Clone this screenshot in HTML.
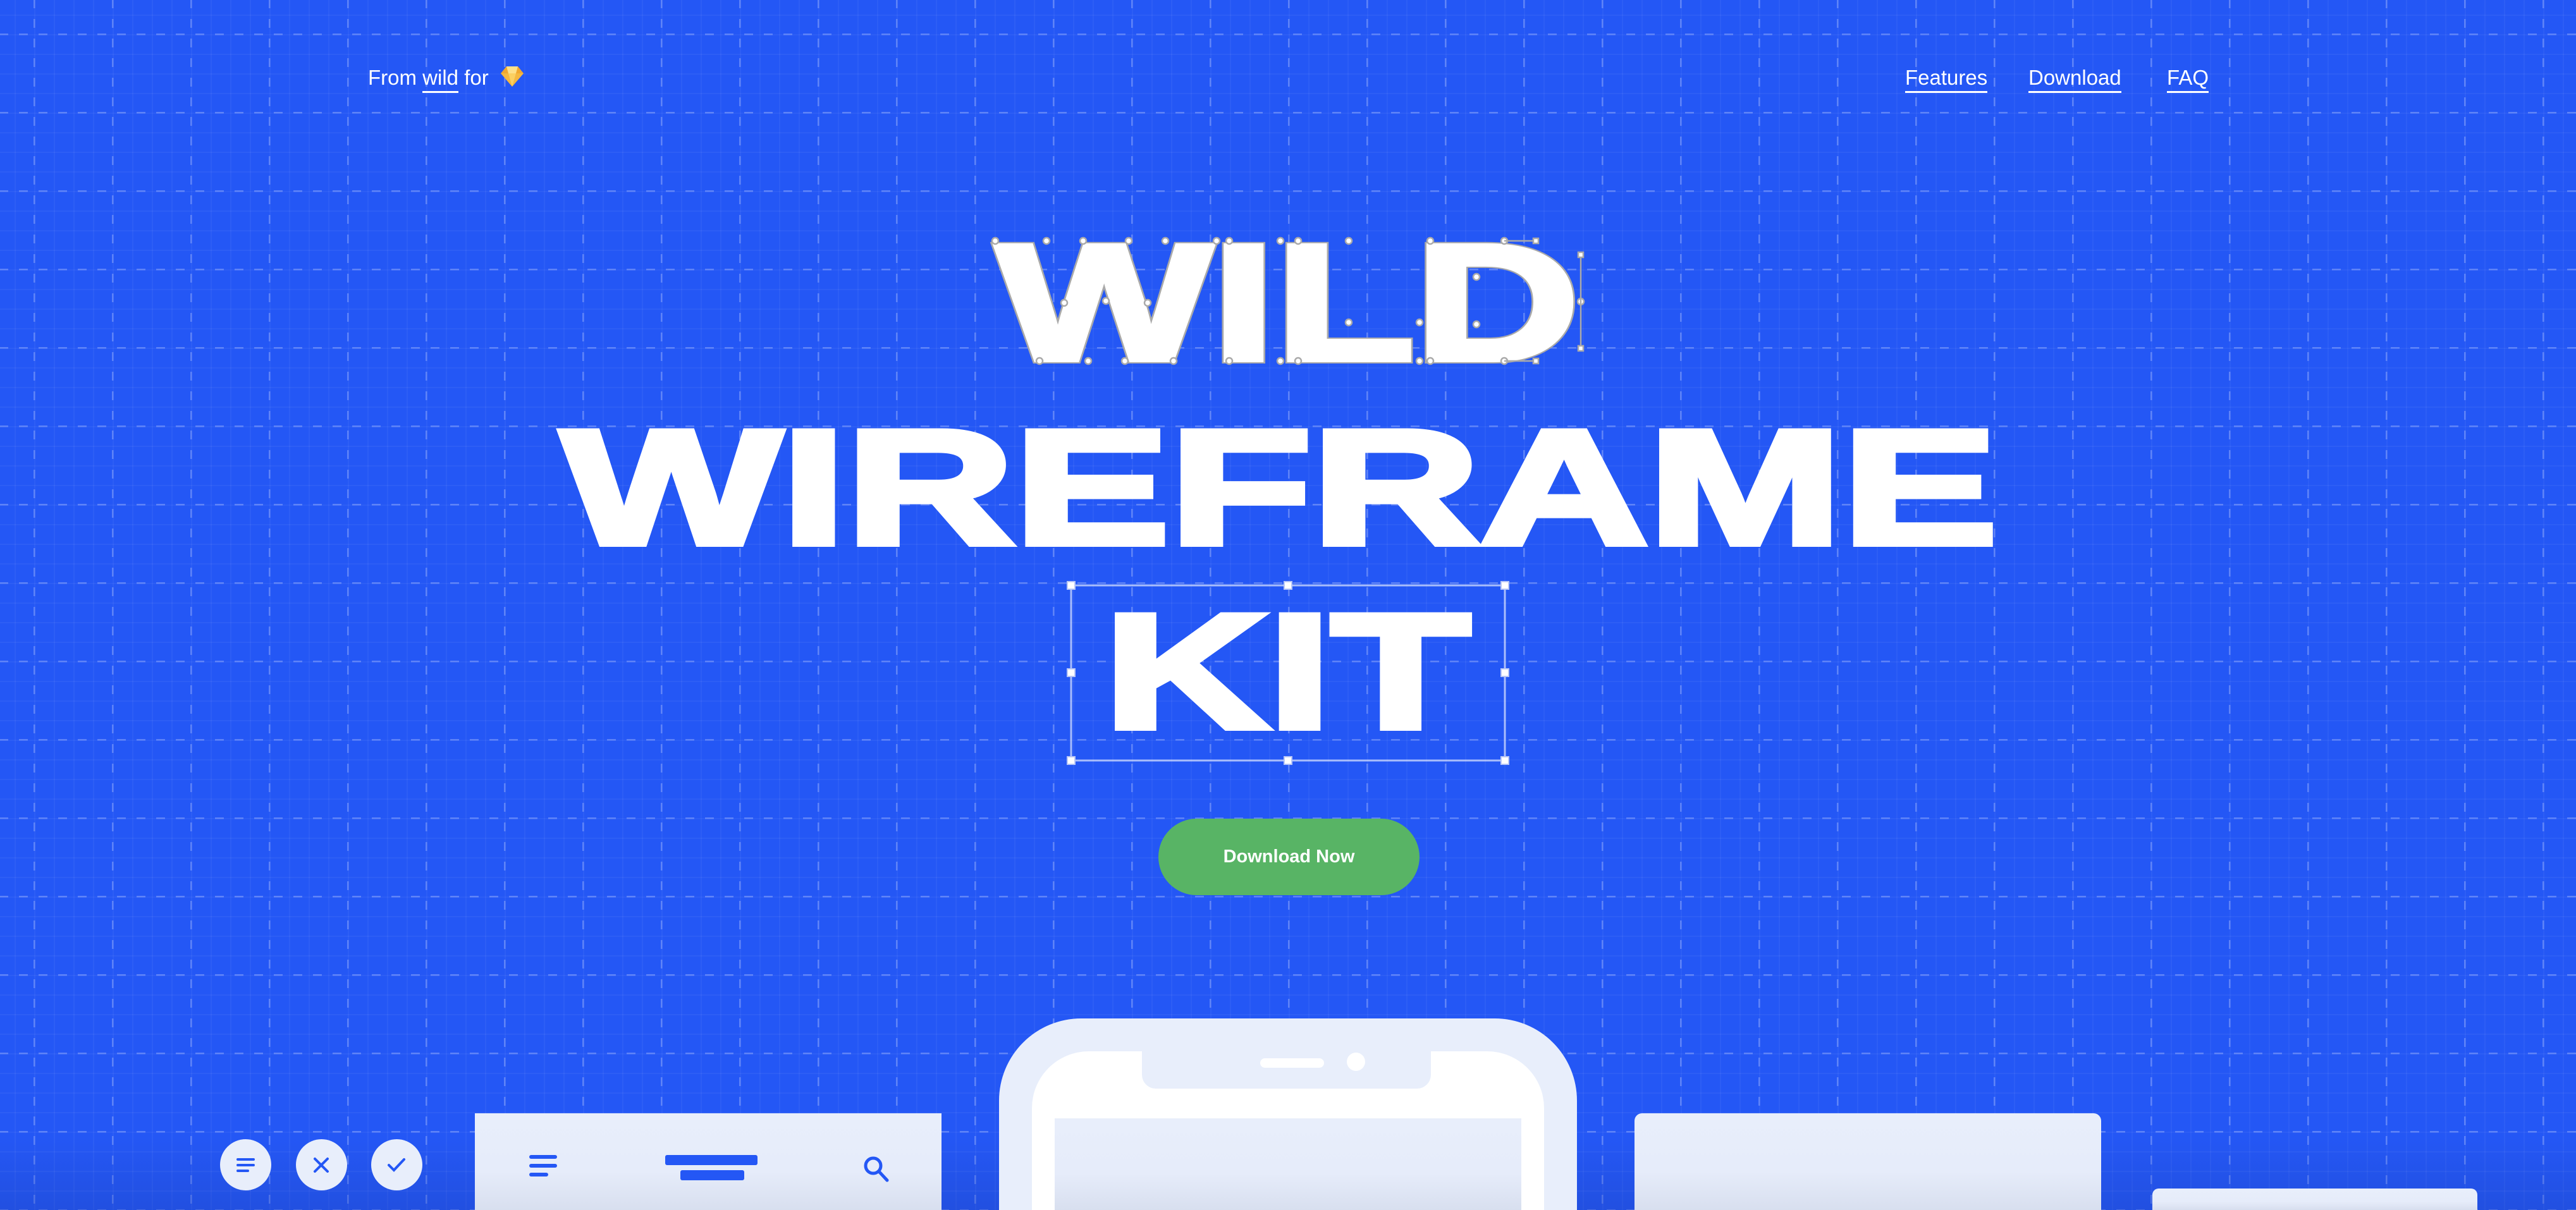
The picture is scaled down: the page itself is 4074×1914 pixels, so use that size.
<!DOCTYPE html>
<html><head><meta charset="utf-8"><style>
html,body{margin:0;padding:0;width:4074px;height:1914px;overflow:hidden}
body{background:#2457F5;position:relative;font-family:"Liberation Sans",sans-serif;color:#fff}
#w{position:absolute;left:0;top:0;width:4074px;height:1914px;overflow:hidden}
.a{position:absolute}
.nav{font-size:33px;top:103px;line-height:40px}
.nav u{text-decoration:none;border-bottom:3px solid #fff;padding-bottom:3px}
.card{background:linear-gradient(#E8EEFB 0%,#E6ECFA 60%,#D8DFEF 100%)}
</style></head><body><div id="w">
<svg class="a" style="left:0;top:0" width="4074" height="1914">
<defs>
<pattern id="mn" x="54" y="54" width="31" height="31" patternUnits="userSpaceOnUse">
<rect x="0" y="0" width="2" height="31" fill="rgba(255,255,255,0.045)"/>
<rect x="0" y="0" width="31" height="2" fill="rgba(255,255,255,0.045)"/>
</pattern>
<pattern id="mj" x="53" y="53" width="124" height="124" patternUnits="userSpaceOnUse">
<line x1="1" y1="0" x2="1" y2="124" stroke="rgba(255,255,255,0.25)" stroke-width="3" stroke-dasharray="14 17" stroke-dashoffset="-8"/>
<line x1="0" y1="1" x2="124" y2="1" stroke="rgba(255,255,255,0.25)" stroke-width="3" stroke-dasharray="14 17" stroke-dashoffset="-8"/>
</pattern>
<linearGradient id="bot" x1="0" y1="0" x2="0" y2="1"><stop offset="0" stop-color="#1E3FB0" stop-opacity="0"/><stop offset="1" stop-color="#1E3FB0" stop-opacity="0.3"/></linearGradient>
</defs>
<rect width="4074" height="1914" fill="url(#mn)"/>
<rect width="4074" height="1914" fill="url(#mj)"/>
<rect y="1800" width="4074" height="114" fill="url(#bot)"/>

<text x="1576" y="569" font-family="Liberation Sans" font-weight="bold" font-size="262" textLength="922" lengthAdjust="spacingAndGlyphs" fill="#aaa" stroke="#aaa" stroke-width="12" stroke-linejoin="miter">WILD</text>
<text x="1576" y="569" font-family="Liberation Sans" font-weight="bold" font-size="262" textLength="922" lengthAdjust="spacingAndGlyphs" fill="#fff" stroke="#fff" stroke-width="8" stroke-linejoin="miter">WILD</text>
<g fill="#fff" stroke="#aaa" stroke-width="2.5">
<circle cx="1574" cy="381" r="5"/><circle cx="1655" cy="381" r="5"/><circle cx="1713" cy="381" r="5"/><circle cx="1785" cy="381" r="5"/><circle cx="1843" cy="381" r="5"/><circle cx="1924" cy="381" r="5"/><circle cx="1944" cy="381" r="5"/><circle cx="2025" cy="381" r="5"/><circle cx="2053" cy="381" r="5"/><circle cx="2133" cy="381" r="5"/><circle cx="2262" cy="381" r="5"/><circle cx="2379" cy="381" r="5"/>
<circle cx="1644" cy="571" r="5"/><circle cx="1721" cy="571" r="5"/><circle cx="1779" cy="571" r="5"/><circle cx="1856" cy="571" r="5"/><circle cx="1944" cy="571" r="5"/><circle cx="2025" cy="571" r="5"/><circle cx="2053" cy="571" r="5"/><circle cx="2245" cy="571" r="5"/><circle cx="2262" cy="571" r="5"/><circle cx="2379" cy="571" r="5"/>
<circle cx="1683" cy="479" r="5"/><circle cx="1749" cy="476" r="5"/><circle cx="1815" cy="479" r="5"/><circle cx="2133" cy="510" r="5"/><circle cx="2245" cy="510" r="5"/><circle cx="2335" cy="438" r="5"/><circle cx="2335" cy="513" r="5"/><circle cx="2500" cy="477" r="5"/>
<line x1="2379" y1="381" x2="2429" y2="381"/><line x1="2379" y1="571" x2="2429" y2="571"/><line x1="2500" y1="403" x2="2500" y2="551"/>
<rect x="2425" y="377" width="8" height="8"/><rect x="2496" y="399" width="8" height="8"/><rect x="2496" y="547" width="8" height="8"/><rect x="2425" y="567" width="8" height="8"/>
</g>

<text x="888" y="860" font-family="Liberation Sans" font-weight="bold" font-size="258" textLength="2271" lengthAdjust="spacingAndGlyphs" fill="#fff" stroke="#fff" stroke-width="10" stroke-linejoin="miter">WIREFRAME</text>
<text x="1746" y="1151" font-family="Liberation Sans" font-weight="bold" font-size="258" textLength="579" lengthAdjust="spacingAndGlyphs" fill="#fff" stroke="#fff" stroke-width="10">KIT</text>
<rect x="1694" y="926" width="686" height="277" fill="none" stroke="rgba(255,255,255,0.6)" stroke-width="3"/>
<g fill="#fff" stroke="#b8c6f5" stroke-width="2">
<rect x="1688" y="920" width="12" height="12"/><rect x="2031" y="920" width="12" height="12"/><rect x="2374" y="920" width="12" height="12"/>
<rect x="1688" y="1058" width="12" height="12"/><rect x="2374" y="1058" width="12" height="12"/>
<rect x="1688" y="1197" width="12" height="12"/><rect x="2031" y="1197" width="12" height="12"/><rect x="2374" y="1197" width="12" height="12"/>
</g>
<g transform="translate(792,105)">
<polygon points="9,0 27,0 36,11 18,32 0,11" fill="#F0A830"/>
<polygon points="9,0 27,0 24,11 12,11" fill="#FDE08A"/>
<polygon points="0,11 36,11 18,32" fill="#F5B840"/>
<polygon points="12,11 24,11 18,32" fill="#FBD062"/>
</g>
</svg>

<div class="a nav" style="left:582px">From <u>wild</u> for</div>
<div class="a nav" style="left:3013px"><u>Features</u></div>
<div class="a nav" style="left:3208px"><u>Download</u></div>
<div class="a nav" style="left:3427px"><u>FAQ</u></div>

<div class="a" style="left:1832px;top:1295px;width:413px;height:121px;border-radius:61px;background:#58B465;color:#fff;font-weight:bold;font-size:29px;line-height:121px;text-align:center">Download Now</div>

<div class="a" style="left:348px;top:1802px;width:81px;height:81px;border-radius:50%;background:#E8EEFB"></div>
<div class="a" style="left:468px;top:1802px;width:81px;height:81px;border-radius:50%;background:#E8EEFB"></div>
<div class="a" style="left:587px;top:1802px;width:81px;height:81px;border-radius:50%;background:#E8EEFB"></div>
<svg class="a" style="left:348px;top:1802px" width="320" height="81">
<g stroke="#2457F5" stroke-width="4" stroke-linecap="round" fill="none">
<line x1="28" y1="32" x2="53" y2="32"/><line x1="28" y1="41" x2="53" y2="41"/><line x1="28" y1="50" x2="44" y2="50"/>
<line x1="150" y1="31" x2="170" y2="51"/><line x1="170" y1="31" x2="150" y2="51"/>
<polyline points="267,41 275,49 291,32"/>
</g></svg>

<div class="a card" style="left:751px;top:1761px;width:738px;height:153px"></div>
<svg class="a" style="left:751px;top:1761px" width="738" height="153">
<g fill="#2457F5">
<rect x="86" y="66" width="44" height="6" rx="3"/><rect x="86" y="80" width="44" height="6" rx="3"/><rect x="86" y="94" width="30" height="6" rx="3"/>
<rect x="301" y="66" width="146" height="16" rx="3"/><rect x="325" y="90" width="101" height="16" rx="3"/>
</g>
<circle cx="630" cy="83" r="12" fill="none" stroke="#2457F5" stroke-width="5"/>
<line x1="639" y1="92" x2="652" y2="106" stroke="#2457F5" stroke-width="5" stroke-linecap="round"/>
</svg>

<div class="a" style="left:1580px;top:1611px;width:914px;height:303px;border-radius:130px 130px 0 0;background:#E8EEFB"></div>
<div class="a" style="left:1632px;top:1663px;width:810px;height:251px;border-radius:90px 90px 0 0;background:#fff"></div>
<div class="a" style="left:1806px;top:1655px;width:457px;height:67px;border-radius:0 0 22px 22px;background:#E8EEFB"></div>
<div class="a" style="left:1993px;top:1674px;width:101px;height:15px;border-radius:8px;background:#fff"></div>
<div class="a" style="left:2130px;top:1665px;width:29px;height:29px;border-radius:50%;background:#fff"></div>
<div class="a card" style="left:1668px;top:1769px;width:738px;height:145px"></div>

<div class="a card" style="left:2585px;top:1761px;width:738px;height:153px;border-radius:12px 12px 0 0"></div>
<div class="a card" style="left:3404px;top:1880px;width:514px;height:34px;border-radius:10px 10px 0 0"></div>
</div></body></html>
